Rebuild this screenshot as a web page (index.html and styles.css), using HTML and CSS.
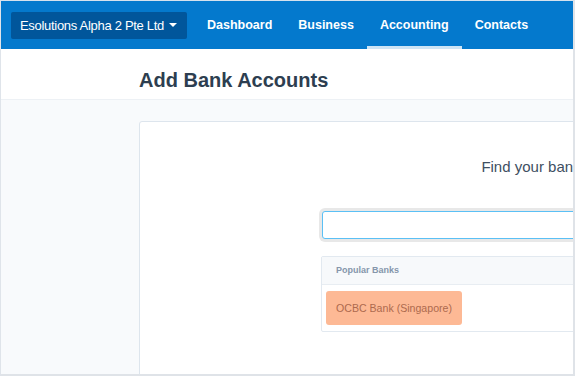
FILE: index.html
```html
<!DOCTYPE html>
<html lang="en">
<head>
    <meta charset="UTF-8">
    <meta name="viewport" content="width=device-width, initial-scale=1.0">
    <title>Add Bank Accounts</title>
    <link rel="stylesheet" href="styles.css">
</head>
<body>
    <div class="frame">
        <nav class="topbar">
            <button class="org">Esolutions Alpha 2 Pte Ltd<span class="caret"></span></button>
            <a class="nav-link" href="#">Dashboard</a>
            <a class="nav-link" href="#">Business</a>
            <a class="nav-link active" href="#">Accounting</a>
            <a class="nav-link" href="#">Contacts</a>
        </nav>
        <header class="page-head">
            <h1>Add Bank Accounts</h1>
        </header>
        <main class="page-body">
            <section class="card">
                <p class="find">Find your bank</p>
                <input class="search" type="text">
                <div class="panel">
                    <div class="panel-head">Popular Banks</div>
                    <div class="panel-body">
                        <button class="bank">OCBC Bank (Singapore)</button>
                    </div>
                </div>
            </section>
        </main>
    </div>
</body>
</html>
```

FILE: styles.css
```css
body {
    margin: 0;
    font-family: "Liberation Sans", Arial, sans-serif;
}
.frame {
    width: 575px;
    height: 376px;
    box-sizing: border-box;
    border-top: 1px solid #d6e2ee;
    border-left: 1px solid #dfe4ea;
    border-right: 2px solid #dfe3e8;
    border-bottom: 2px solid #dfe3e8;
    overflow: hidden;
    background: #f8fafc;
}
.topbar {
    display: flex;
    height: 48px;
    padding-left: 10px;
    background: #0479cd;
}
.org {
    align-self: center;
    display: flex;
    align-items: center;
    height: 27px;
    margin-right: 7px;
    padding: 0 10px 0 9px;
    border: none;
    border-radius: 2px;
    background: #01569b;
    color: #fff;
    font-family: inherit;
    font-size: 13px;
    letter-spacing: -0.3px;
    white-space: nowrap;
}
.caret {
    width: 0;
    height: 0;
    margin-left: 5px;
    border-left: 4px solid transparent;
    border-right: 4px solid transparent;
    border-top: 4px solid #fff;
}
.nav-link {
    display: flex;
    align-items: center;
    padding: 0 13px;
    color: #fff;
    font-size: 12.5px;
    font-weight: bold;
    text-decoration: none;
    white-space: nowrap;
}
.nav-link.active {
    box-shadow: inset 0 -3px 0 #cde4f5;
}
.page-head {
    height: 51px;
    box-sizing: border-box;
    padding: 19px 0 0 138px;
    background: #fff;
    border-bottom: 1px solid #edf1f5;
}
.page-head h1 {
    margin: 0;
    font-size: 20px;
    line-height: 24px;
    color: #2d3e50;
    white-space: nowrap;
}
.page-body {
    padding: 21px 0 0 138px;
}
.card {
    width: 784px;
    height: 300px;
    padding-top: 36px;
    box-sizing: border-box;
    background: #fff;
    border: 1px solid #dde5ed;
    border-radius: 3px;
    text-align: center;
}
.find {
    margin: 0;
    font-size: 15px;
    line-height: 18px;
    color: #3e4f62;
}
.search {
    display: block;
    width: 418px;
    height: 28px;
    box-sizing: border-box;
    margin: 35px auto 0;
    border: 1px solid #5bc0f5;
    border-radius: 3px;
    box-shadow: 0 0 0 3px #e8e8e8;
    outline: none;
}
.panel {
    width: 418px;
    margin: 17px auto 0;
    border: 1px solid #e2e9f0;
    border-radius: 2px;
    text-align: left;
}
.panel-head {
    height: 27px;
    padding-left: 14px;
    background: #f7f9fb;
    border-bottom: 1px solid #e8edf2;
    font-size: 9px;
    font-weight: bold;
    line-height: 27px;
    color: #8596ab;
}
.panel-body {
    padding: 6px 4px;
}
.bank {
    height: 34px;
    padding: 0 10px;
    border: none;
    border-radius: 3px;
    background: #fdb995;
    color: #ad6a4e;
    font-family: inherit;
    font-size: 10.6px;
}
```
